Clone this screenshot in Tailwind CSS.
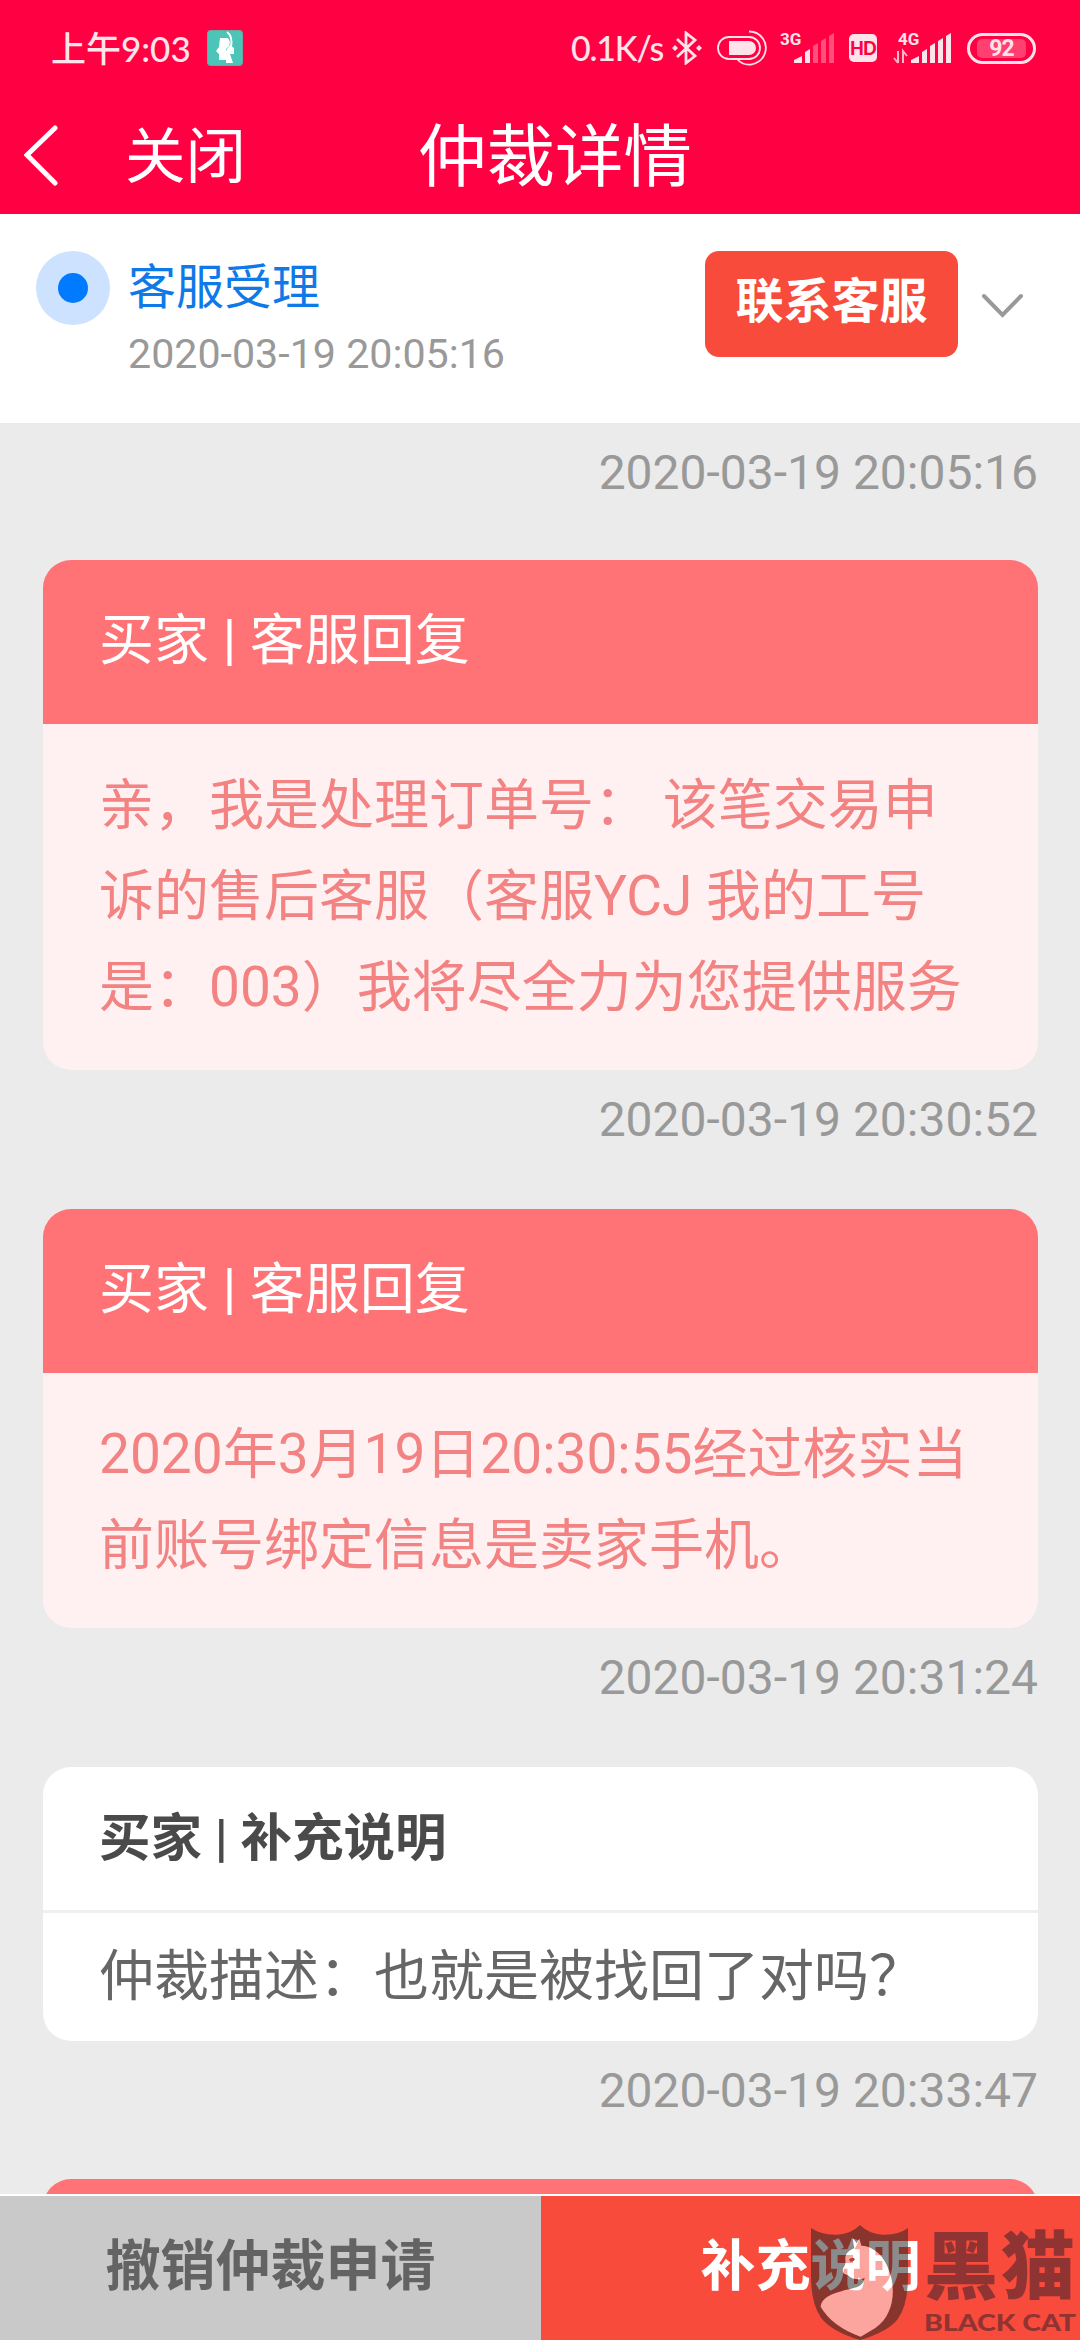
<!DOCTYPE html>
<html lang="zh-CN">
<head>
  <meta charset="UTF-8" />
  <meta name="viewport" content="width=device-width, initial-scale=1" />
  <title>仲裁详情</title>
  <script src="https://cdn.jsdelivr.net/npm/@tailwindcss/browser@4"></script>
</head>
<body class="w-[1080px] h-[2340px] overflow-hidden flex flex-col bg-[#ebebeb] font-[Roboto,'Noto_Sans_CJK_SC',sans-serif]">

  <!-- Header -->
  <header class="h-[214px] shrink-0 bg-[#ff0042] text-white">
    <div class="h-24 flex items-center pl-[51px] pr-[44px] text-[#ffe3ea] font-[Lato,'Noto_Sans_CJK_SC',sans-serif]">
      <span class="w-[141px] whitespace-nowrap text-[35px] leading-none font-medium">上午9:03</span>
      <svg class="ml-[15px] w-9 h-9" viewBox="0 0 36 36">
        <rect x=".5" y=".5" width="35" height="35" rx="3" fill="#4cc5b8" stroke="#6aa7a4" />
        <path d="M13 8h8l2 4-1 4-3 3 2 5-2 6h-7v-6l-3-3 3-4z" fill="#fff" />
        <path d="M20 2q6 4 4 15" fill="none" stroke="#fff" stroke-width="2" />
        <path d="M23 15l4 3v6h-4l3 9h-7v-9l1-5z" fill="#fff" />
      </svg>

      <!-- Status icons -->
      <span class="ml-auto w-[93px] whitespace-nowrap text-[34px] leading-none tracking-[-1.200px] font-medium">0.1K/s</span>
      <svg class="ml-[8px] w-[30px] h-[34px]" viewBox="0 0 30 34" fill="none" stroke="#ffe3ea" stroke-width="2.800">
        <path d="M5 8l18 17-9 7V2l9 7L5 26" />
        <path d="M3 14l3 3-3 3-3-3zM27 14l3 3-3 3-3-3z" fill="#ffe3ea" stroke="none" />
      </svg>
      <svg class="ml-[15px] w-[51px] h-9" viewBox="0 0 51 36" fill="none" stroke="#ffe3ea" stroke-width="1.800">
        <rect x="1" y="7" width="42" height="22" rx="11" />
        <path d="M12 11h20a7 7 0 0 1 0 14H12z" fill="#ffe3ea" stroke="none" />
        <path d="M32 1.500a16.500 16.500 0 1 1-12 27.500" />
      </svg>
      <svg class="ml-[12px] w-[55px] h-9 overflow-visible" viewBox="0 0 55 36" fill="#ffe3ea">
        <text x="0" y="15" font-family="Roboto, sans-serif" font-size="17" font-weight="700">3G</text>
        <path d="M14 33v-3l8-4v7zM25 33V22l5-3v14z" />
        <path d="M33 33V16l5-3v20zM41 33V11l5-3v25zM49 33V6l5-3v30z" opacity=".35" />
      </svg>
      <div class="ml-[14px] w-[28px] h-[28px] rounded-[5px] bg-[#ffe3ea] text-[#ff0042] text-[18px] leading-[28px] font-black text-center tracking-[-0.800px]">HD</div>
      <svg class="ml-[16px] w-[59px] h-9 overflow-visible" viewBox="0 0 59 36" fill="#ffe3ea">
        <text x="5" y="15" font-family="Roboto, sans-serif" font-size="17" font-weight="700">4G</text>
        <path d="M5 21v12M5 33l-4-5M10 33V21l4 5" fill="none" stroke="#ffe3ea" stroke-width="2" opacity=".8" />
        <path d="M18 33v-3l8-4v7zM29 33V22l5-3v14zM37 33V16l5-3v20zM45 33V11l5-3v25zM53 33V6l5-3v30z" />
      </svg>
      <div class="ml-[15px] w-[69px] h-[31px] rounded-full border-3 border-[#ffe3ea] px-[7px] py-[3px]">
        <div class="h-[19px] rounded-[5px] bg-white/25 font-[Roboto,sans-serif] text-[23px] leading-[20px] font-bold text-center tracking-[-1px]">92</div>
      </div>
    </div>
    <div class="h-[118px] flex items-center px-6">
      <svg class="w-9 h-[62px]" viewBox="0 0 36 62" fill="none" stroke="#fff" stroke-width="5" stroke-linecap="round"><path d="M31 4L3 31l28 28" /></svg>
      <span class="ml-[65px] pt-[6px] text-[60.500px] leading-none">关闭</span>
      <h1 class="ml-[172px] pt-[6px] text-[68.500px] leading-none">仲裁详情</h1>
    </div>
  </header>

  <!-- Current step -->
  <section class="h-[209px] shrink-0 flex items-start bg-white pl-9 pt-[37px]">
    <div class="w-[74px] h-[74px] rounded-full bg-[#cce2ff] flex items-center justify-center">
      <div class="w-[30px] h-[30px] rounded-full bg-[#007aff]"></div>
    </div>
    <div class="ml-[18px] pt-[2px]">
      <p class="text-[48px] leading-[70px] text-[#1079e8]">客服受理</p>
      <p class="text-[41.200px] leading-[62px] text-[#999]">2020-03-19 20:05:16</p>
    </div>
    <button class="ml-auto w-[253px] h-[106px] pb-[4px] rounded-[14px] bg-[#f84b3c] text-white text-[48px] leading-none font-bold">联系客服</button>
    <svg class="ml-[22px] mr-[55px] mt-[40px] w-[45px] h-[30px]" viewBox="0 0 45 30" fill="none" stroke="#999" stroke-width="4" stroke-linecap="round"><path d="M4 5l18.500 19L41 5" /></svg>
  </section>

  <!-- Messages -->
  <main class="flex-1 min-h-0 overflow-hidden pl-[43px] pr-[42px]">
    <p class="h-[137px] pt-[15px] text-right text-[48px] leading-[70px] text-[#999]">2020-03-19 20:05:16</p>
    <article class="rounded-[28px] overflow-hidden bg-[#fff1f1]">
      <h2 class="h-[164px] pl-[56px] pt-[35px] bg-[#ff7376] text-white text-[55px] leading-[91px]">买家 | 客服回复</h2>
      <p class="pl-[56px] pt-9 pb-[37px] whitespace-nowrap text-[55px] leading-[91px] text-[#f38282]">亲，我是处理订单号： 该笔交易申<br />诉的售后客服（客服YCJ 我的工号<br />是：003）我将尽全力为您提供服务</p>
    </article>
    <p class="h-[139px] pt-[15px] text-right text-[48px] leading-[70px] text-[#999]">2020-03-19 20:30:52</p>
    <article class="rounded-[28px] overflow-hidden bg-[#fff1f1]">
      <h2 class="h-[164px] pl-[56px] pt-[35px] bg-[#ff7376] text-white text-[55px] leading-[91px]">买家 | 客服回复</h2>
      <p class="pl-[56px] pt-9 pb-[37px] whitespace-nowrap text-[55px] leading-[91px] text-[#f38282]">2020年3月19日20:30:55经过核实当<br />前账号绑定信息是卖家手机。</p>
    </article>
    <p class="h-[139px] pt-[15px] text-right text-[48px] leading-[70px] text-[#999]">2020-03-19 20:31:24</p>
    <article class="h-[274px] rounded-[28px] overflow-hidden bg-white">
      <h2 class="h-[146px] pl-[56px] pt-[28px] border-b-3 border-[#efefef] text-[#4a4a4a] text-[51.500px] leading-[88px] font-bold">买家 | 补充说明</h2>
      <p class="pl-[56px] pt-[18px] text-[55px] leading-[91px] text-[#666]">仲裁描述：也就是被找回了对吗？</p>
    </article>
    <p class="h-[138px] pt-[15px] text-right text-[48px] leading-[70px] text-[#999]">2020-03-19 20:33:47</p>
    <article class="h-[164px] rounded-t-[28px] bg-[#ff7376]"></article>
  </main>

  <!-- Bottom actions -->
  <footer class="relative h-[146px] shrink-0 flex border-t-2 border-white text-[55px] leading-[138px] font-bold text-center">
    <button class="w-[541px] pb-[5px] bg-[#c9c9c9] text-[#636363]">撤销仲裁申请</button>
    <button class="flex-1 pb-[5px] bg-[#f84b3c] text-white">补充说明</button>

    <!-- Watermark -->
    <div class="absolute left-[811px] top-[29px] w-[269px] flex">
      <svg class="w-[97px] h-[115px] shrink-0" viewBox="33 30 291 345">
        <path fill="#202020" fill-opacity=".52" fill-rule="evenodd" d="M33 39Q65 61 113 59Q153 57 180 30Q207 57 247 59Q295 61 324 39V184Q324 269 294 311Q266 349 180 375Q94 349 63 308Q33 265 33 184Z
          M158 70L170 85L178 71L184 92C235 95 265 145 274 190C286 245 274 305 226 339L182 365Q95 333 62 275C66 243 105 234 140 224C176 218 191 210 194 188C180 196 155 194 143 179C131 181 124 167 131 157C138 148 137 141 136 132C136 113 150 106 163 100Z" />
        <path fill="#fff" fill-opacity=".5" d="M158 70L170 85L178 71L184 92C235 95 265 145 274 190C286 245 274 305 226 339L182 365Q95 333 62 275C66 243 105 234 140 224C176 218 191 210 194 188C180 196 155 194 143 179C131 181 124 167 131 157C138 148 137 141 136 132C136 113 150 106 163 100Z" />
        <path fill="#b8403c" d="M147 134q9-10 18-2-4 10-14 8z" />
      </svg>
      <div class="ml-[16px] w-[154px] text-left text-[#8f3432]">
        <p class="mt-[6px] whitespace-nowrap text-[74px] leading-[74px] tracking-[3px] font-black">黑猫</p>
        <svg class="mt-[8px] w-[153px] h-[22px] overflow-visible" viewBox="0 0 153 22" fill="currentColor">
          <text x="0" y="18" font-family="Lato, sans-serif" font-size="23" font-weight="900" textLength="152" lengthAdjust="spacingAndGlyphs">BLACK CAT</text>
        </svg>
      </div>
    </div>
  </footer>
</body>
</html>
